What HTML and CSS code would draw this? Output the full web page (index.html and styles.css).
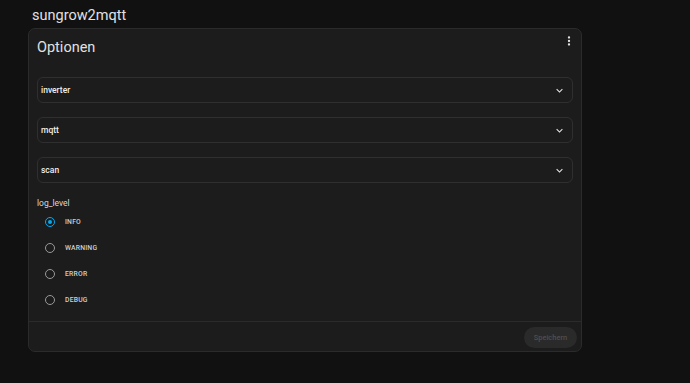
FILE: index.html
```html
<!DOCTYPE html>
<html>
<head>
<meta charset="utf-8">
<link rel="stylesheet" href="styles.css">
</head>
<body>
<div class="page">
  <div class="page-title">sungrow2mqtt</div>
  <div class="card">
    <div class="card-header">
      <div class="card-title">Optionen</div>
      <svg class="kebab" viewBox="0 0 24 24"><path d="M12,16A2,2 0 0,1 14,18A2,2 0 0,1 12,20A2,2 0 0,1 10,18A2,2 0 0,1 12,16M12,10A2,2 0 0,1 14,12A2,2 0 0,1 12,14A2,2 0 0,1 10,12A2,2 0 0,1 12,10M12,4A2,2 0 0,1 14,6A2,2 0 0,1 12,8A2,2 0 0,1 10,6A2,2 0 0,1 12,4Z"/></svg>
    </div>
    <div class="card-content">
      <div class="expander"><span>inverter</span><svg class="chev" viewBox="0 0 24 24"><path d="M7.41,8.58L12,13.17L16.59,8.58L18,10L12,16L6,10L7.41,8.58Z"/></svg></div>
      <div class="expander"><span>mqtt</span><svg class="chev" viewBox="0 0 24 24"><path d="M7.41,8.58L12,13.17L16.59,8.58L18,10L12,16L6,10L7.41,8.58Z"/></svg></div>
      <div class="expander"><span>scan</span><svg class="chev" viewBox="0 0 24 24"><path d="M7.41,8.58L12,13.17L16.59,8.58L18,10L12,16L6,10L7.41,8.58Z"/></svg></div>
      <div class="field-label">log_level</div>
      <div class="radio-row"><span class="radio checked"></span><span class="radio-label">INFO</span></div>
      <div class="radio-row"><span class="radio"></span><span class="radio-label">WARNING</span></div>
      <div class="radio-row"><span class="radio"></span><span class="radio-label">ERROR</span></div>
      <div class="radio-row"><span class="radio"></span><span class="radio-label">DEBUG</span></div>
    </div>
    <div class="card-actions">
      <button class="save">Speichern</button>
    </div>
  </div>
</div>
</body>
</html>
```

FILE: styles.css
```css
html, body {
  margin: 0;
  padding: 0;
  background: #111111;
  font-family: Roboto, "Liberation Sans", sans-serif;
  color: #e1e1e1;
}
.page {
  padding: 6px 0 0 28px;
}
.page-title {
  font-size: 14.5px;
  line-height: 20px;
  height: 22px;
  padding-left: 4px;
  color: #e1e1e1;
}
.card {
  width: 554px;
  box-sizing: border-box;
  background: #1c1c1c;
  border: 1px solid #2b2b2b;
  border-radius: 7px;
}
.card-header {
  display: flex;
  justify-content: space-between;
  align-items: flex-start;
  height: 40px;
  padding: 0 5px 0 8px;
}
.card-title {
  margin-top: 10px;
  font-size: 14.5px;
  line-height: 18px;
  color: #e1e1e1;
}
.kebab {
  width: 14px;
  height: 14px;
  margin-top: 5px;
  fill: #e1e1e1;
}
.card-content {
  padding: 8px 8px 8px 8px;
}
.expander {
  height: 26px;
  box-sizing: border-box;
  border: 1px solid #2f2f2f;
  border-radius: 6px;
  display: flex;
  align-items: center;
  justify-content: space-between;
  padding: 0 6px 0 3px;
  margin-bottom: 14px;
  font-size: 8.5px;
  font-weight: 500;
  color: #eeeeee;
}
.chev {
  width: 13px;
  height: 13px;
  fill: #e1e1e1;
}
.field-label {
  margin-top: 1px;
  font-size: 8.5px;
  line-height: 12px;
  color: #d8d8d8;
}
.radio-row {
  height: 26px;
  display: flex;
  align-items: center;
  padding-left: 8px;
}
.radio {
  width: 10px;
  height: 10px;
  box-sizing: border-box;
  border: 1.5px solid #9a9a9a;
  border-radius: 50%;
  position: relative;
  flex: none;
}
.radio.checked {
  border-color: #03a9f4;
}
.radio.checked::after {
  content: "";
  position: absolute;
  left: 1.5px;
  top: 1.5px;
  width: 4px;
  height: 4px;
  border-radius: 50%;
  background: #03a9f4;
}
.radio-label {
  margin-left: 10px;
  font-size: 6.8px;
  font-weight: 500;
  letter-spacing: 0.2px;
  color: #cfcfcf;
}
.card-actions {
  border-top: 1px solid #2b2b2b;
  display: flex;
  justify-content: flex-end;
  padding: 5px 4px 3px 4px;
}
.save {
  height: 21px;
  width: 53px;
  border: none;
  border-radius: 11px;
  background: #2a2a2a;
  color: #4f4f4f;
  font-family: Roboto, "Liberation Sans", sans-serif;
  font-size: 7.5px;
  font-weight: 500;
  padding: 0;
}
```
